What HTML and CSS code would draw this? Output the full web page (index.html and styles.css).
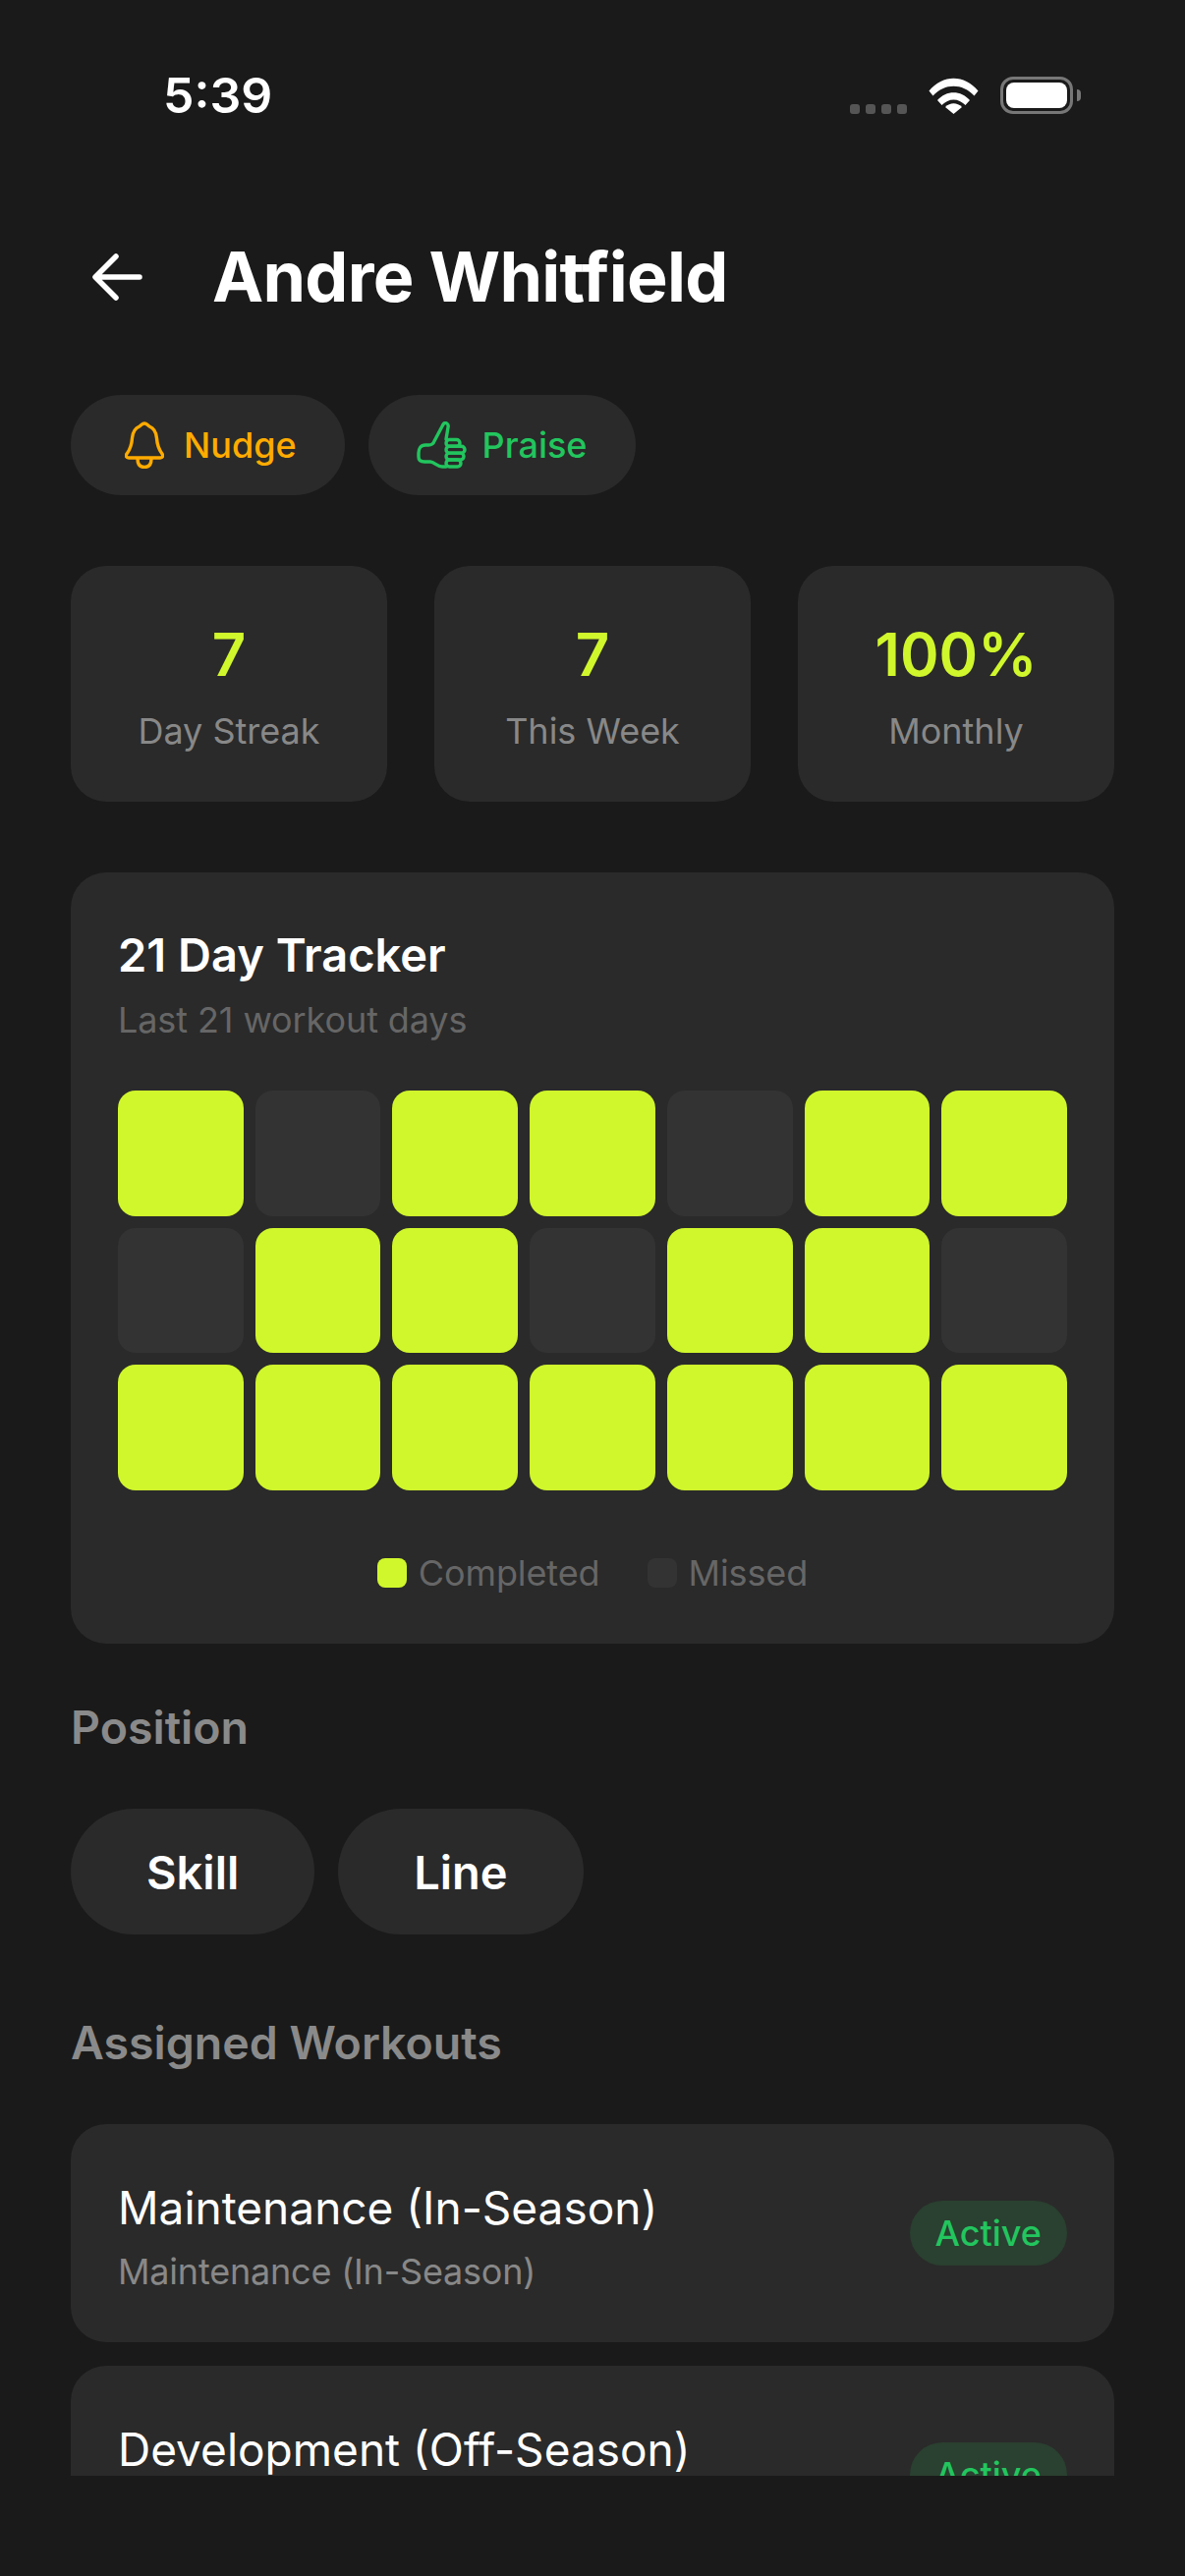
FILE: index.html
```html
<!DOCTYPE html>
<html lang="en">
<head>
    <meta charset="UTF-8">
    <meta name="viewport" content="width=device-width, initial-scale=1.0">
    <title>Andre Whitfield</title>
    <link rel="stylesheet" href="styles.css">
</head>
<body>
    <div class="status-bar">
        <span class="time">5:39</span>
        <div class="status-icons">
            <div class="signal"><i></i><i></i><i></i><i></i></div>
            <svg class="wifi" viewBox="0 0 51 37">
                <path d="M0.5 13.5 C14.5 -3.5 36.5 -3.5 50.5 13.5 L46.5 18.5 C34.5 5.5 16.5 5.5 4.5 18.5 Z" fill="#fff"/>
                <path d="M9 23 C18 12.5 33 12.5 42 23 L37.5 28 C30.5 20.5 20.5 20.5 13.5 28 Z" fill="#fff"/>
                <path d="M17 30 C22 25 29 25 34 30 L25.5 37 Z" fill="#fff"/>
            </svg>
            <div class="battery"><div class="battery-level"></div></div>
            <div class="battery-cap"></div>
        </div>
    </div>

    <main class="screen">
        <header class="header">
            <svg class="back" viewBox="0 0 51 48" fill="none" stroke="#fff" stroke-width="5.5" stroke-linecap="round" stroke-linejoin="round">
                <path d="M48 24 H4 M24 3 L3 24 L24 45"/>
            </svg>
            <h1>Andre Whitfield</h1>
        </header>

        <div class="actions">
            <button class="action nudge">
                <svg viewBox="0 0 40 48" fill="none" stroke="#ffab00" stroke-width="3.4" stroke-linecap="round" stroke-linejoin="round">
                    <path d="M20 2 C22 2 23 3.5 25 5 C30 7 32 11 32.5 17 C33 25 35 29 38 33 C39.5 35 38.5 37 36 37 H4 C1.5 37 0.5 35 2 33 C5 29 7 25 7.5 17 C8 11 10 7 15 5 C17 3.5 18 2 20 2 Z"/>
                    <path d="M13 38 C13 44 16 46.5 20 46.5 C24 46.5 27 44 27 38"/>
                </svg>
                Nudge
            </button>
            <button class="action praise">
                <svg viewBox="0 0 51 48" fill="none" stroke="#22c55e" stroke-width="3.4" stroke-linecap="round" stroke-linejoin="round">
                    <path d="M30 18 L32 6 C33 2 29 0 27 3 L18 20 C17 23 15 24 12 24 H9 C4 24 2 28 2 32 V36 C2 39 4 41 8 41 H14 C18 41 21 46 26 46 H30"/>
                    <rect x="30" y="18.5" width="14" height="6.8" rx="3.4"/>
                    <rect x="30" y="25.3" width="19" height="6.8" rx="3.4"/>
                    <rect x="30" y="32.1" width="18" height="6.9" rx="3.4"/>
                    <rect x="30" y="39" width="15" height="7" rx="3.4"/>
                </svg>
                Praise
            </button>
        </div>

        <section class="stats">
            <div class="stat"><div class="stat-value">7</div><div class="stat-label">Day Streak</div></div>
            <div class="stat"><div class="stat-value">7</div><div class="stat-label">This Week</div></div>
            <div class="stat"><div class="stat-value">100%</div><div class="stat-label">Monthly</div></div>
        </section>

        <section class="tracker">
            <h2>21 Day Tracker</h2>
            <p class="tracker-sub">Last 21 workout days</p>
            <div class="day-grid">
                <div class="day done"></div><div class="day"></div><div class="day done"></div><div class="day done"></div><div class="day"></div><div class="day done"></div><div class="day done"></div>
                <div class="day"></div><div class="day done"></div><div class="day done"></div><div class="day"></div><div class="day done"></div><div class="day done"></div><div class="day"></div>
                <div class="day done"></div><div class="day done"></div><div class="day done"></div><div class="day done"></div><div class="day done"></div><div class="day done"></div><div class="day done"></div>
            </div>
            <div class="legend">
                <div class="legend-item"><span class="swatch done"></span>Completed</div>
                <div class="legend-item"><span class="swatch"></span>Missed</div>
            </div>
        </section>

        <h3 class="section-title">Position</h3>
        <div class="positions">
            <div class="position">Skill</div>
            <div class="position">Line</div>
        </div>

        <h3 class="section-title workouts-title">Assigned Workouts</h3>
        <div class="workouts">
            <div class="workout">
                <div class="workout-text">
                    <div class="workout-name">Maintenance (In-Season)</div>
                    <div class="workout-type">Maintenance (In-Season)</div>
                </div>
                <span class="badge">Active</span>
            </div>
            <div class="workout">
                <div class="workout-text">
                    <div class="workout-name">Development (Off-Season)</div>
                    <div class="workout-type">Development (Off-Season)</div>
                </div>
                <span class="badge">Active</span>
            </div>
        </div>
    </main>
</body>
</html>
```

FILE: styles.css
```css
* {
    box-sizing: border-box;
}

html, body {
    margin: 0;
    padding: 0;
    height: 2622px;
    overflow: hidden;
}

body {
    font-family: 'Inter', 'Roboto', sans-serif;
    background-color: #1a1a1a;
    color: #fff;
}

/* status bar */
.status-bar {
    height: 150px;
    padding: 72px 106px 0 166px;
    display: flex;
    justify-content: space-between;
    align-items: flex-start;
}

.time {
    font-size: 50px;
    line-height: 50px;
    font-weight: 600;
}

.status-icons {
    display: flex;
    align-items: flex-end;
    height: 44px;
}

.signal {
    display: flex;
    gap: 6px;
    margin-right: 22px;
}

.signal i {
    display: block;
    width: 10px;
    height: 10px;
    border-radius: 3px;
    background: #555;
}

.wifi {
    width: 51px;
    height: 37px;
    margin-right: 22px;
}

.battery {
    width: 74px;
    height: 38px;
    border: 3px solid #777;
    border-radius: 13px;
    padding: 3px;
}

.battery-level {
    height: 100%;
    background: #fff;
    border-radius: 8px;
}

.battery-cap {
    width: 4px;
    height: 12px;
    margin: 0 0 13px 4px;
    background: #777;
    border-radius: 0 4px 4px 0;
}

/* page content, cut off above the home indicator area */
.screen {
    height: 2370px;
    margin: 0 72px;
    overflow: hidden;
}

.header {
    display: flex;
    align-items: flex-start;
    gap: 71px;
    padding: 78px 0 0 22px;
    height: 252px;
}

.back {
    width: 51px;
    height: 48px;
    margin-top: 30px;
    flex: none;
}

.header h1 {
    margin: 0;
    font-size: 70px;
    line-height: 108px;
    font-weight: 700;
    letter-spacing: -0.75px;
}

.actions {
    display: flex;
    gap: 24px;
}

.action {
    display: flex;
    align-items: center;
    height: 102px;
    padding: 0 49px 0 55px;
    border: none;
    border-radius: 51px;
    background: #2a2a2a;
    font-family: inherit;
    font-size: 36px;
    font-weight: 500;
    gap: 20px;
}

.action svg {
    width: 40px;
    height: 48px;
}

.nudge { color: #ffab00; }
.praise { color: #22c55e; padding-left: 49px; gap: 16px; }
.praise svg { width: 51px; }

.stats {
    display: grid;
    grid-template-columns: repeat(3, 1fr);
    gap: 48px;
    margin-top: 72px;
}

.stat {
    height: 240px;
    background: #2a2a2a;
    border-radius: 36px;
    text-align: center;
    padding-top: 54px;
}

.stat-value {
    font-size: 60px;
    line-height: 72px;
    font-weight: 600;
    color: #d0f72c;
}

.stat-label {
    margin-top: 20px;
    font-size: 36px;
    line-height: 44px;
    color: #888;
}

.tracker {
    margin-top: 72px;
    padding: 58px 48px 48px;
    background: #2a2a2a;
    border-radius: 36px;
    height: 785px;
}

.tracker h2 {
    margin: 0;
    font-size: 47px;
    line-height: 52px;
    font-weight: 600;
}

.tracker-sub {
    margin: 18px 0 0;
    font-size: 36px;
    line-height: 44px;
    letter-spacing: -0.1px;
    color: #666;
}

.day-grid {
    display: grid;
    grid-template-columns: repeat(7, 1fr);
    gap: 12px;
    margin-top: 50px;
}

.day {
    aspect-ratio: 1;
    border-radius: 18px;
    background: #333;
}

.day.done {
    background: #d0f72c;
}

.legend {
    display: flex;
    justify-content: center;
    gap: 48px;
    margin-top: 62px;
}

.legend-item {
    display: flex;
    align-items: center;
    gap: 12px;
    font-size: 36px;
    line-height: 44px;
    letter-spacing: -0.1px;
    color: #666;
}

.swatch {
    width: 30px;
    height: 30px;
    border-radius: 8px;
    background: #333;
}

.swatch.done {
    background: #d0f72c;
}

.section-title {
    margin: 57px 0 0;
    font-size: 46.5px;
    line-height: 56px;
    font-weight: 600;
    color: #8a8a8a;
}

.positions {
    display: flex;
    gap: 24px;
    margin-top: 55px;
}

.position {
    height: 128px;
    padding: 0 77px;
    border-radius: 64px;
    background: #2a2a2a;
    display: flex;
    align-items: center;
    font-size: 47px;
    font-weight: 600;
}

.workouts-title {
    margin-top: 82px;
}

.workouts {
    display: flex;
    flex-direction: column;
    gap: 24px;
    margin-top: 55px;
}

.workout {
    min-height: 222px;
    padding: 0 48px;
    border-radius: 36px;
    background: #2a2a2a;
    display: flex;
    justify-content: space-between;
    align-items: center;
}

.workout-text {
    padding-top: 7px;
}

.workout-name {
    font-size: 46px;
    line-height: 56px;
    font-weight: 400;
}

.workout-type {
    margin-top: 15px;
    font-size: 36px;
    line-height: 44px;
    letter-spacing: -0.2px;
    color: #888;
}

.badge {
    height: 66px;
    padding: 0 26px;
    border-radius: 33px;
    background: #2a4030;
    color: #22c55e;
    display: flex;
    align-items: center;
    font-size: 36px;
    font-weight: 500;
}
```
